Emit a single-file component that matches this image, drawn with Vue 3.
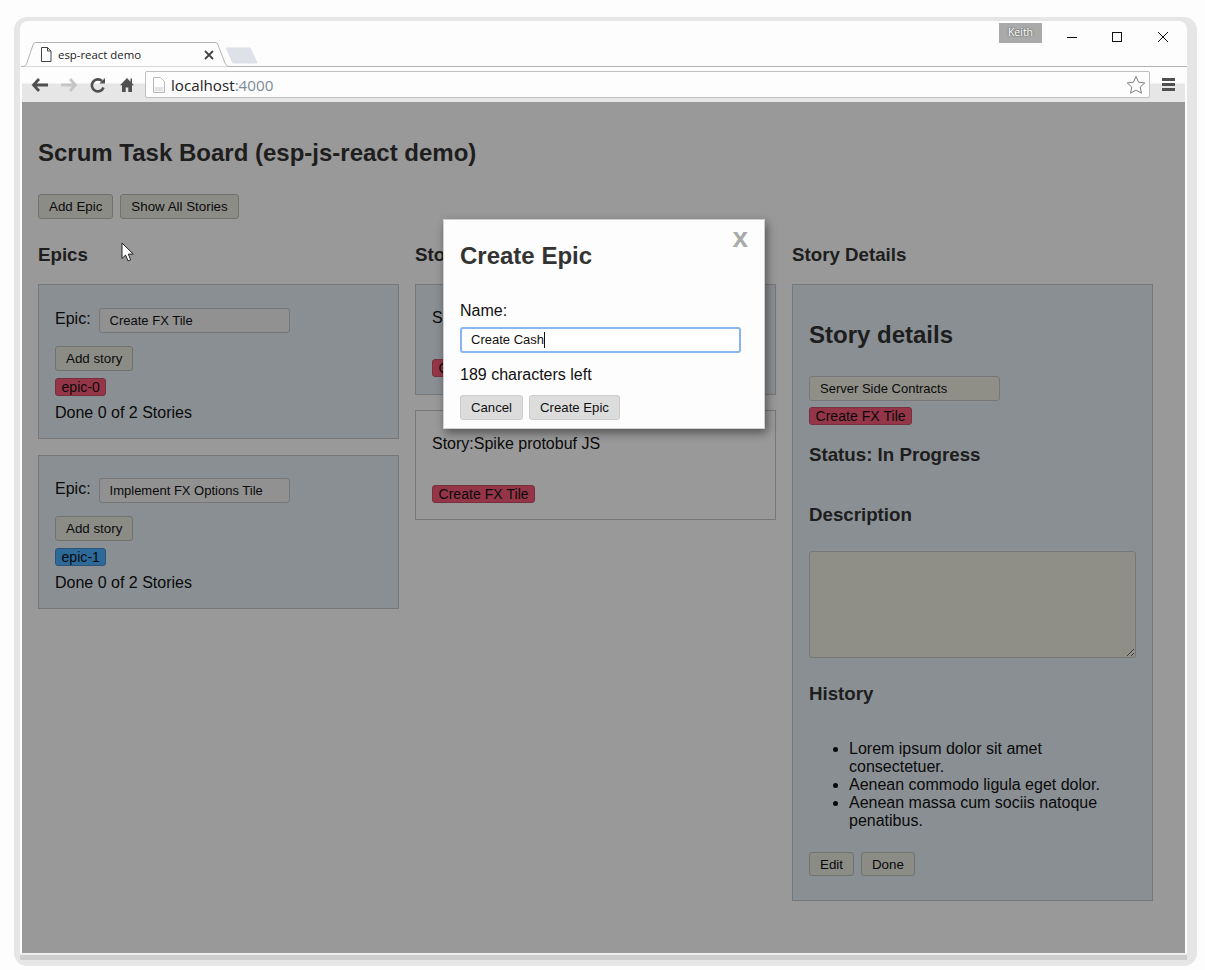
<script setup>
const epics = [
  { name: 'Create FX Tile', tag: 'epic-0', tone: 'red' },
  { name: 'Implement FX Options Tile', tag: 'epic-1', tone: 'blue' }
]
const stories = [
  { name: 'Story:Server Side Contracts', active: true },
  { name: 'Story:Spike protobuf JS', active: false }
]
const history = [
  'Lorem ipsum dolor sit amet consectetuer.',
  'Aenean commodo ligula eget dolor.',
  'Aenean massa cum sociis natoque penatibus.'
]
</script>

<template>
  <div class="screen">
    <div class="frame">
      <div class="window">
        <div class="titlebar">
          <span class="user">Keith</span>
          <span class="ctl">
            <svg width="16" height="16" viewBox="0 0 16 16"><path d="M3 8.500h10" stroke="#111" fill="none" /></svg>
          </span>
          <span class="ctl">
            <svg width="16" height="16" viewBox="0 0 16 16"><rect x="3.500" y="3.500" width="9" height="9" stroke="#111" fill="none" /></svg>
          </span>
          <span class="ctl last">
            <svg width="16" height="16" viewBox="0 0 16 16"><path d="M3 3l10 10M13 3L3 13" stroke="#111" fill="none" /></svg>
          </span>
        </div>
        <div class="tabrow">
          <div class="tab">
            <svg class="tabshape" width="210" height="25" viewBox="0 0 210 25">
              <path d="M0 24.500c4 0 5-1 6-4L12 3c.6-1.800 1.500-2.500 3-2.500h179c1.500 0 2.400.7 3 2.500l7 18c1 2.500 2 3.500 5 3.500" fill="#fdfdfd" stroke="#b3b3b3" />
            </svg>
            <svg class="favicon" width="12" height="15" viewBox="0 0 12 15">
              <path d="M1.500.5h6l3.500 3.500v10.500h-9.500zM7.500.5v3.500h3.500" fill="#fff" stroke="#444" />
            </svg>
            <span class="tabtitle">esp-react demo</span>
            <svg class="tabclose" width="10" height="10" viewBox="0 0 10 10">
              <path d="M1 1l8 8M9 1l-8 8" stroke="#444" stroke-width="1.800" fill="none" />
            </svg>
          </div>
          <svg class="newtab" width="34" height="17" viewBox="0 0 34 17">
            <path d="M1 1.500c0-.6.400-1 1-1h22c1 0 1.600.5 2 1.300l6 13c.4.800 0 1.700-1 1.700H9c-1 0-1.600-.5-2-1.300z" fill="#dee2e8" />
          </svg>
        </div>
        <div class="toolbar">
          <span class="tool">
            <svg width="18" height="16" viewBox="0 0 18 16"><path d="M8 2L2.500 8 8 14M3 8h14" stroke="#505050" stroke-width="2.800" fill="none" /></svg>
          </span>
          <span class="tool">
            <svg width="18" height="16" viewBox="0 0 18 16"><path d="M10 2l5.500 6L10 14M15 8H1" stroke="#c6c6c6" stroke-width="2.800" fill="none" /></svg>
          </span>
          <span class="tool">
            <svg width="18" height="18" viewBox="0 0 18 18">
              <path d="M14.500 11.500A6 6 0 1 1 13 5" stroke="#505050" stroke-width="2.600" fill="none" />
              <path d="M10.500 7.500H16V2z" fill="#505050" />
            </svg>
          </span>
          <span class="tool">
            <svg width="16" height="16" viewBox="0 0 16 16">
              <path d="M8 1L1 8.200h2V15h3.700v-4.500h2.600V15H13V8.200h2l-2-2V1.500h-1.500v3.200z" fill="#505050" />
            </svg>
          </span>
          <div class="omnibox">
            <svg class="pageicon" width="12" height="16" viewBox="0 0 12 16">
              <path d="M.5.5h7l4 4v11H.5z" fill="#fff" stroke="#b8b8b8" />
              <path d="M1.500 10h9v4.500h-9z" fill="#e4e4e4" />
            </svg>
            <span class="url">localhost<em>:4000</em></span>
            <svg class="star" width="20" height="20" viewBox="0 0 20 20">
              <path d="M10 1.500l2.600 5.700 6.200.7-4.600 4.200 1.300 6.100L10 15.100l-5.500 3.100 1.300-6.100L1.200 7.900l6.200-.7z" fill="#fdfdfd" stroke="#808080" />
            </svg>
          </div>
          <span class="menu"><i></i><i></i><i></i></span>
        </div>

        <div class="page">
          <h2 class="title">Scrum Task Board (esp-js-react demo)</h2>
          <div class="actions">
            <button class="btn">Add Epic</button>
            <button class="btn">Show All Stories</button>
          </div>
          <div class="columns">
            <section>
              <h3>Epics</h3>
              <div class="stack">
                <div v-for="e in epics" :key="e.tag" class="card epic">
                  <div class="epicrow">
                    <span>Epic:</span>
                    <input class="field" :value="e.name" />
                  </div>
                  <button class="btn addstory">Add story</button>
                  <div class="tagrow"><span class="tag" :class="e.tone">{{ e.tag }}</span></div>
                  <div class="done">Done 0 of 2 Stories</div>
                </div>
              </div>
            </section>
            <section>
              <h3>Stories</h3>
              <div class="stack storystack">
                <div v-for="s in stories" :key="s.name" class="card story" :class="{ plain: !s.active }">
                  <div class="storyname">{{ s.name }}</div>
                  <div><span class="tag red">Create FX Tile</span></div>
                </div>
              </div>
            </section>
            <section>
              <h3>Story Details</h3>
              <div class="card details">
                <h2>Story details</h2>
                <input class="field olive" value="Server Side Contracts" />
                <div class="detailtag"><span class="tag red">Create FX Tile</span></div>
                <h3 class="status">Status: In Progress</h3>
                <h3 class="desc">Description</h3>
                <textarea class="area"></textarea>
                <h3 class="hist">History</h3>
                <ul>
                  <li v-for="h in history" :key="h">{{ h }}</li>
                </ul>
                <div class="detailbtns">
                  <button class="btn">Edit</button>
                  <button class="btn">Done</button>
                </div>
              </div>
            </section>
          </div>

          <div class="overlay"></div>

          <svg class="cursor" width="14" height="21" viewBox="0 0 14 21">
            <path d="M1 1v15.500l3.600-3.400 2.400 5.800 2.700-1.100-2.400-5.700h5z" fill="#fff" stroke="#222" />
          </svg>

          <div class="modal">
            <span class="close">x</span>
            <h2>Create Epic</h2>
            <div class="namelabel">Name:</div>
            <div class="focusfield">Create Cash<span class="caret"></span></div>
            <div class="left">189 characters left</div>
            <div class="modalbtns">
              <button class="mbtn">Cancel</button>
              <button class="mbtn">Create Epic</button>
            </div>
          </div>
        </div>
        <div class="foot"></div>
      </div>
    </div>
  </div>
</template>

<style scoped>
.screen {
  width: 1205px;
  height: 970px;
  background: #fdfdfd;
  padding: 17px 8px 4px 14px;
  box-sizing: border-box;
  font-family: "Liberation Sans", Arial, sans-serif;
  overflow: hidden;
}
.frame {
  width: 1183px;
  height: 949px;
  background: #e6e6e6;
  border-radius: 13px;
  padding: 4px 10px 6px 6px;
  box-sizing: border-box;
}
.window {
  width: 1167px;
  height: 939px;
  background: #fdfdfd;
  border-radius: 8px 8px 0 0;
  padding: 0 2px;
  box-sizing: border-box;
  display: flex;
  flex-direction: column;
}
.titlebar {
  height: 21px;
  flex: none;
  display: flex;
  justify-content: flex-end;
  align-items: flex-start;
}
.user {
  margin-top: 2px;
  margin-right: 7px;
  width: 43px;
  height: 20px;
  background: #aaa;
  color: #fff;
  font: 10.5px/19px "Open Sans", sans-serif;
  text-align: center;
  text-shadow: 0 0 2px #333;
}
.ctl {
  width: 45px;
  height: 32px;
  padding-top: 8px;
  box-sizing: border-box;
  display: flex;
  justify-content: center;
  align-items: flex-start;
}
.ctl.last {
  width: 46px;
  padding-left: 1px;
}
.tabrow {
  height: 25px;
  flex: none;
  display: flex;
  align-items: flex-start;
  box-shadow: inset 0 -1px 0 #b3b3b3;
  margin: 0 -2px 0 0;
}
.tab {
  position: relative;
  width: 204px;
  height: 25px;
  flex: none;
  display: flex;
  align-items: center;
  padding-left: 18px;
  box-sizing: border-box;
}
.tabshape {
  position: absolute;
  left: -1px;
  top: 0;
}
.favicon,
.tabtitle,
.tabclose {
  position: relative;
}
.tabtitle {
  margin-left: 6px;
  font: 11.4px "Open Sans", sans-serif;
  color: #222;
  width: 144px;
  white-space: nowrap;
}
.tabclose {
  margin-left: 2px;
}
.newtab {
  margin: 5px 0 0 -1px;
  flex: none;
}
.toolbar {
  height: 35px;
  flex: none;
  background: linear-gradient(#fdfdfd 16px, #e6e6e6 17px);
  display: flex;
  align-items: flex-start;
  padding: 4px 0 0 3px;
  box-sizing: border-box;
}
.tool {
  width: 29px;
  height: 27px;
  display: flex;
  justify-content: center;
  align-items: center;
}
.omnibox {
  width: 1005px;
  height: 27px;
  margin-left: 4px;
  background: #fdfdfd;
  border: 1px solid #c0c0c0;
  border-radius: 2px;
  box-sizing: border-box;
  display: flex;
  align-items: center;
  padding: 0 3px 0 7px;
}
.url {
  margin-left: 6px;
  font: 15.2px "Open Sans", sans-serif;
  color: #222;
  flex: 1;
}
.url em {
  font-style: normal;
  color: #7c8a99;
}
.menu {
  margin: 3px 0 0 12px;
  width: 13px;
  display: flex;
  flex-direction: column;
  gap: 2px;
  padding-top: 4px;
}
.menu i {
  display: block;
  height: 3px;
  background: #505050;
}
.page {
  position: relative;
  height: 851px;
  flex: none;
  background: #fff;
  padding: 0 16px;
  box-sizing: border-box;
  color: #111;
  overflow: hidden;
}
.foot {
  height: 2px;
  background: #eee;
  border-bottom: 5px solid #cdcdcd;
  margin: 0 -2px;
  box-sizing: content-box;
}
h2 {
  font-size: 24px;
  line-height: 28px;
  margin: 0;
  color: #333;
  font-weight: 700;
}
h3 {
  font-size: 18.72px;
  line-height: 22px;
  margin: 0;
  color: #333;
  font-weight: 700;
}
.title {
  padding-top: 37px;
}
.actions {
  margin-top: 27px;
  display: flex;
  gap: 7px;
}
.btn {
  height: 25px;
  padding: 0 10px;
  border: 1px solid #bdbdb6;
  border-radius: 3px;
  background: #e9e9e0;
  color: #111;
  font: 13.33px "Liberation Sans", Arial, sans-serif;
}
.columns {
  margin-top: 25px;
  display: grid;
  grid-template-columns: 361px 361px 361px;
  gap: 16px;
}
.columns > section > h3 {
  margin-bottom: 18px;
}
.stack {
  display: flex;
  flex-direction: column;
  gap: 16px;
}
.storystack {
  gap: 15px;
}
.card {
  border: 1px solid #c6c6c6;
  padding: 0 16px;
  box-sizing: border-box;
  background: #e6eff6;
}
.card.plain {
  background: #fff;
}
.epic {
  height: 155px;
  padding-top: 23px;
}
.epic:last-child {
  height: 154px;
  padding-top: 22px;
}
.epicrow {
  display: flex;
  align-items: center;
  gap: 8px;
  font-size: 16px;
  height: 25px;
}
.epicrow span {
  padding-bottom: 4px;
}
.field {
  width: 191px;
  height: 25px;
  padding: 0 10px;
  border: 1px solid #c6c6c6;
  border-radius: 3px;
  background: #f2f2f2;
  color: #111;
  font: 13px "Liberation Sans", Arial, sans-serif;
  box-sizing: border-box;
  display: block;
}
.field.olive {
  background: #efefe2;
}
.addstory {
  display: block;
  margin-top: 13px;
  height: 25px;
}
.tagrow {
  margin-top: 7px;
  height: 18px;
  display: flex;
}
.tag {
  display: inline-block;
  height: 18px;
  line-height: 17px;
  padding: 0 5.5px;
  border: 1px solid transparent;
  border-radius: 3px;
  font-size: 14px;
  letter-spacing: 0.05px;
  box-sizing: border-box;
  color: #111;
}
.tag.red {
  background: #f85a78;
  border-color: #c85068;
}
.tag.blue {
  background: #4bb0ff;
  border-color: #4a8cc8;
}
.done {
  margin-top: 8px;
  font-size: 16px;
  line-height: 18px;
}
.story {
  height: 110px;
  padding-top: 24px;
}
.story:first-child {
  height: 111px;
}
.storyname {
  font-size: 16px;
  line-height: 18px;
  height: 50px;
}
.details {
  height: 617px;
  padding-top: 36px;
}
.details .detailtag {
  margin-top: 6px;
  height: 18px;
  display: flex;
}
.details > input {
  margin-top: 27px;
}
.status {
  margin-top: 19px;
}
.desc {
  margin-top: 38px;
}
.area {
  display: block;
  width: 327px;
  height: 107px;
  margin-top: 25px;
  box-sizing: border-box;
  background: #efefe2;
  border: 1px solid #c6c6c6;
  border-radius: 3px;
}
.hist {
  margin-top: 25px;
}
ul {
  margin: 35px 0 0;
  padding-left: 40px;
  font-size: 16px;
  line-height: 18px;
}
.detailbtns {
  margin-top: 22px;
  display: flex;
  gap: 7px;
}
.detailbtns .btn {
  height: 24px;
}
.overlay {
  position: absolute;
  inset: 0;
  background: rgba(0, 0, 0, 0.4);
}
.cursor {
  position: absolute;
  left: 99px;
  top: 140px;
}
.modal {
  position: absolute;
  left: 421px;
  top: 117px;
  width: 322px;
  height: 210px;
  background: #fdfdfd;
  border: 1px solid #cfcfcf;
  box-sizing: border-box;
  box-shadow: 2px 4px 9px rgba(0, 0, 0, 0.45);
  padding: 22px 16px 0;
  color: #111;
}
.close {
  position: absolute;
  right: 16px;
  top: 0;
  font: 700 28px/36px "Liberation Sans", Arial, sans-serif;
  color: #aaa;
}
.namelabel {
  margin-top: 32px;
  font-size: 16px;
  line-height: 18px;
}
.focusfield {
  margin-top: 7px;
  width: 281px;
  height: 26px;
  border: 2px solid #8ab4ee;
  border-radius: 3px;
  box-sizing: border-box;
  padding-left: 9px;
  font-size: 13px;
  line-height: 22px;
  background: #fff;
  display: flex;
  align-items: center;
}
.caret {
  width: 1px;
  height: 16px;
  background: #111;
}
.left {
  margin-top: 13px;
  font-size: 16px;
  line-height: 18px;
}
.modalbtns {
  margin-top: 11px;
  display: flex;
  gap: 6px;
}
.mbtn {
  height: 25px;
  padding: 0 10px;
  border: 1px solid #ccc;
  border-radius: 3px;
  background: #dcdcdc;
  color: #111;
  font: 13.2px "Liberation Sans", Arial, sans-serif;
}
</style>
